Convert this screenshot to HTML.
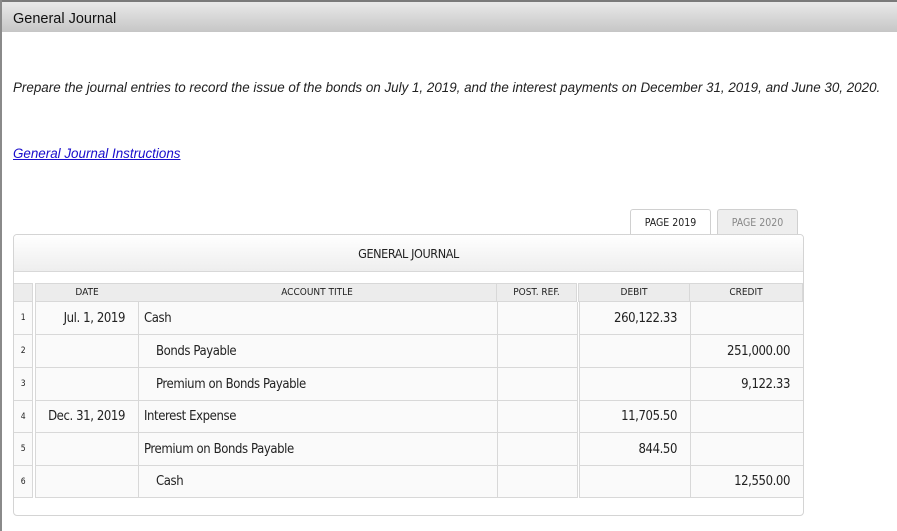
<!DOCTYPE html>
<html><head><style>
body{margin:0;width:897px;height:531px;background:#fff;position:relative;overflow:hidden;font-family:"Liberation Sans",sans-serif}
.topb{position:absolute;left:0;top:0;width:897px;height:2px;background:#7a7a7a}
.leftb{position:absolute;left:0;top:0;width:2px;height:531px;background:#8a8a8a}
.hdr{position:absolute;left:2px;top:2px;width:895px;height:30px;background:linear-gradient(#e9e9e9,#c6c6c6);}
.hdr span{position:absolute;left:11px;top:9px;font-size:14.5px;color:#111}
.instr{position:absolute;left:13px;top:80px;font-size:13.4px;font-style:italic;color:#222;white-space:nowrap}
.link{position:absolute;left:13px;top:146px;font-size:13.4px;font-style:italic;color:#1a0dcc;text-decoration:underline}
.n{font-family:"DejaVu Sans Condensed","Liberation Sans Narrow",sans-serif;letter-spacing:-0.4px}
.tab{position:absolute;top:209px;height:25px;border:1px solid #d0d0d0;border-bottom:none;border-radius:3px 3px 0 0;font-size:10.5px;text-align:center;line-height:26px;box-sizing:border-box;letter-spacing:0}
.box{position:absolute;left:13px;top:234px;width:791px;height:282px;border:1px solid #d4d4d4;border-radius:4px;box-sizing:border-box;background:#fff;overflow:hidden}
.title{position:absolute;left:0;top:0;width:100%;height:36px;background:linear-gradient(#fff,#eeeeee);border-bottom:1px solid #d8d8d8;text-align:center;line-height:38px;font-size:12.5px;color:#222}
.c{position:absolute;box-sizing:border-box;border-right:1px solid #d8d8d8;border-bottom:1px solid #d8d8d8;background:#fafafa;font-size:13px;color:#222;white-space:nowrap}
.h{background:#ececec;font-size:10px;text-align:center;line-height:18px;letter-spacing:0}
.num{font-size:8.5px;text-align:center}
</style></head><body>
<div class="topb"></div><div class="leftb"></div>
<div class="hdr"><span>General Journal</span></div>
<div class="instr">Prepare the journal entries to record the issue of the bonds on July 1, 2019, and the interest payments on December 31, 2019, and June 30, 2020.</div>
<div class="link">General Journal Instructions</div>
<div class="tab n" style="left:630px;width:81px;background:#fff;color:#222">PAGE 2019</div>
<div class="tab n" style="left:717px;width:81px;background:#eeeeee;color:#888">PAGE 2020</div>
<div class="box n">
<div class="title">GENERAL JOURNAL</div>
<div id="g"></div>
</div>
<script>
var cols=[[0,19],[21,104],[124,359],[483,80],[564,112],[676,113]];
var g=document.getElementById('g'),html='';
var hd=['','DATE','ACCOUNT TITLE','POST. REF.','DEBIT','CREDIT'];
var top0=48;
html+='<div class="c h" style="left:0;top:'+top0+'px;width:19px;height:19px;border-top:1px solid #d8d8d8"></div>';
for(var i=1;i<6;i++)html+='<div class="c h" style="left:'+cols[i][0]+'px;top:'+top0+'px;width:'+cols[i][1]+'px;height:19px;border-top:1px solid #d8d8d8;border-left:'+(i==1||i==4?'1px solid #d8d8d8':'0')+'">'+hd[i]+'</div>';
var rows=[['1','Jul. 1, 2019','Cash',0,'260,122.33',''],['2','','Bonds Payable',1,'','251,000.00'],['3','','Premium on Bonds Payable',1,'','9,122.33'],['4','Dec. 31, 2019','Interest Expense',0,'11,705.50',''],['5','','Premium on Bonds Payable',0,'844.50',''],['6','','Cash',1,'','12,550.00']];
var ys=[67,100,133,166,198,231,263];
rows.forEach(function(r,k){var y=ys[k],h=ys[k+1]-y,lh=h+'px';
html+='<div class="c num" style="left:0;top:'+y+'px;width:19px;height:'+h+'px;line-height:'+lh+'">'+r[0]+'</div>';
html+='<div class="c" style="left:21px;top:'+y+'px;width:104px;height:'+h+'px;line-height:'+lh+';text-align:right;padding-right:13px;border-left:1px solid #d8d8d8">'+r[1]+'</div>';
html+='<div class="c" style="left:125px;top:'+y+'px;width:359px;height:'+h+'px;line-height:'+lh+';padding-left:'+(r[3]?17:5)+'px">'+r[2]+'</div>';
html+='<div class="c" style="left:484px;top:'+y+'px;width:80px;height:'+h+'px"></div>';
html+='<div class="c" style="left:565px;top:'+y+'px;width:112px;height:'+h+'px;line-height:'+lh+';text-align:right;padding-right:13px;border-left:1px solid #d8d8d8">'+r[4]+'</div>';
html+='<div class="c" style="left:677px;top:'+y+'px;width:112px;height:'+h+'px;line-height:'+lh+';text-align:right;padding-right:13px;border-right:none">'+r[5]+'</div>';
});
g.innerHTML=html;
</script>
</body></html>
